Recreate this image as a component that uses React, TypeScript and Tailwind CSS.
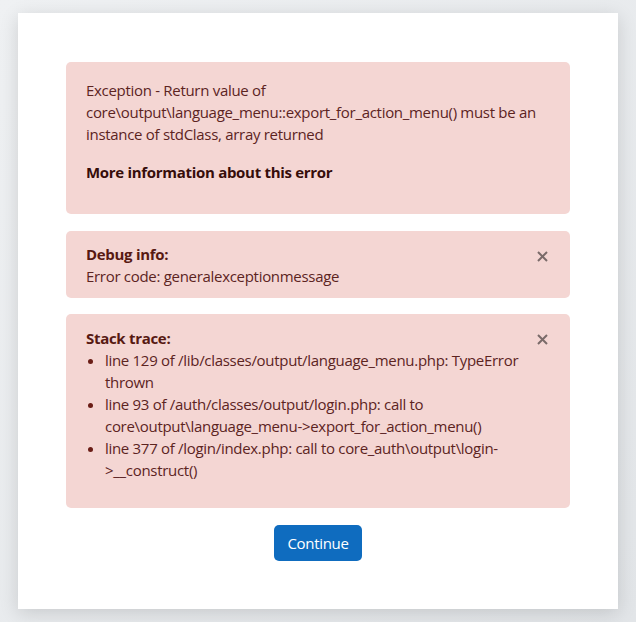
import React from "react";

function CloseX() {
  return (
    <button className="absolute right-[13px] top-[0px] flex h-[50px] w-[30px] items-center justify-center">
      <svg width="11" height="11" viewBox="0 0 11 11" fill="none">
        <path d="M1 1L10 10M10 1L1 10" stroke="#000" strokeOpacity="0.5" strokeWidth="2" />
      </svg>
    </button>
  );
}

export default function App() {
  const font = { fontFamily: '"Open Sans", "Noto Sans", Arial, sans-serif' };
  return (
    <div
      className="min-h-[622px] w-full bg-gradient-to-br from-[#eff1f3] to-[#e2e5e8] pt-[13px] pb-[15px]"
      style={font}
    >
      <div className="mx-[18px] bg-white px-[48px] pt-[49px] pb-[48px] shadow-[0_4px_18px_rgba(0,0,0,0.14)] text-[15px] leading-[22px] tracking-[-0.3px] text-[#5c241f]">
        <div className="rounded-[5px] bg-[#f4d6d3] px-[20px] pt-[17px] pb-[31px]">
          <p className="mb-[16px]">
            Exception - Return value of core\output\language_menu::export_for_action_menu() must be an instance of stdClass, array returned
          </p>
          <p className="font-bold text-[#360d0a]">More information about this error</p>
        </div>

        <div className="relative mt-[17px] rounded-[5px] bg-[#f4d6d3] pl-[20px] pr-[44px] pt-[12px] pb-[11px]">
          <div className="font-bold text-[#571912]">Debug info:</div>
          <div>Error code: generalexceptionmessage</div>
          <CloseX />
        </div>

        <div className="relative mt-[16px] rounded-[5px] bg-[#f4d6d3] pl-[20px] pr-[44px] pt-[13px] pb-[13px]">
          <div className="font-bold text-[#571912]">Stack trace:</div>
          <ul className="mb-[14px] list-disc pl-[19px] marker:text-[#6a1d16]">
            <li>line 129 of /lib/classes/output/language_menu.php: TypeError thrown</li>
            <li>
              line 93 of /auth/classes/output/login.php: call to core\output\language_menu-&gt;export_for_action_menu()
            </li>
            <li>line 377 of /login/index.php: call to core_auth\output\login-&gt;__construct()</li>
          </ul>
          <CloseX />
        </div>

        <div className="mt-[17px] flex justify-center">
          <button className="h-[36px] rounded-[5px] bg-[#0f6cbf] px-[13px] text-[15px] tracking-[-0.3px] text-white">
            Continue
          </button>
        </div>
      </div>
    </div>
  );
}
